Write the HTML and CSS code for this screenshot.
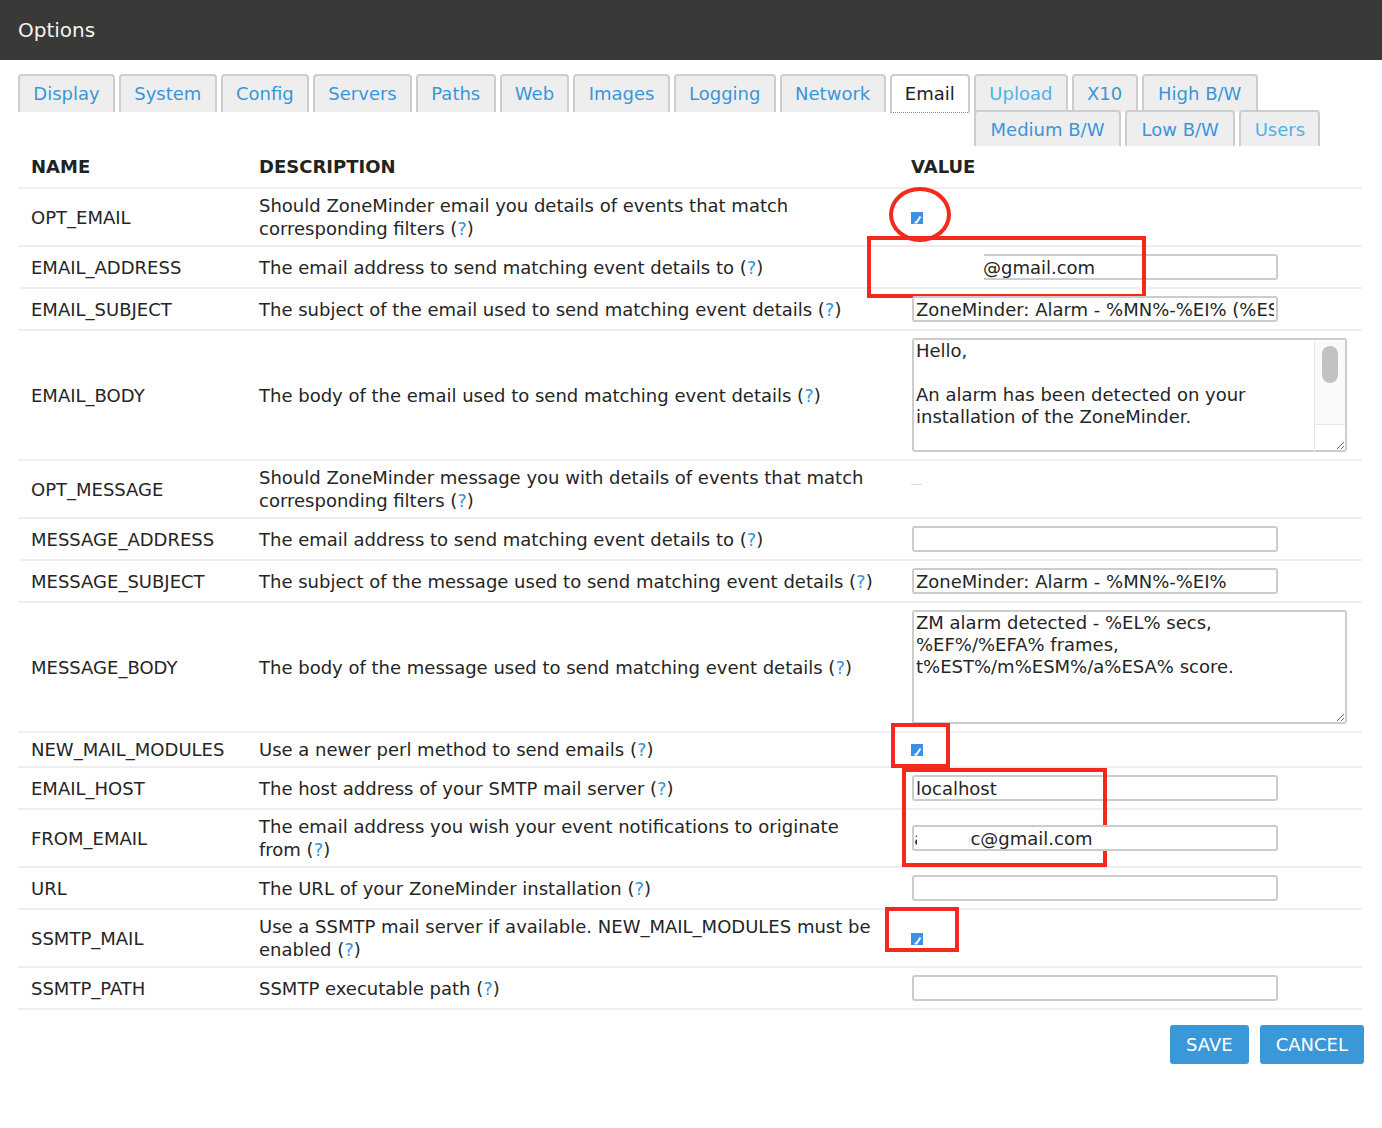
FILE: index.html
```html
<!DOCTYPE html>
<html lang="en">
<head>
    <meta charset="UTF-8">
    <title>Options - ZoneMinder</title>
    <link rel="stylesheet" href="styles.css">
</head>
<body>
    <div class="titlebar">Options</div>

    <div class="page">
        <ul class="tabs">
            <li><a href="#">Display</a></li>
            <li><a href="#">System</a></li>
            <li><a href="#">Config</a></li>
            <li><a href="#">Servers</a></li>
            <li><a href="#">Paths</a></li>
            <li><a href="#">Web</a></li>
            <li><a href="#">Images</a></li>
            <li><a href="#">Logging</a></li>
            <li><a href="#">Network</a></li>
            <li class="active"><a href="#">Email</a></li>
            <li><a href="#" class="fresh">Upload</a></li>
            <li><a href="#">X10</a></li>
            <li><a href="#" class="wide">High B/W</a></li>
            <li><a href="#" class="wide">Medium B/W</a></li>
            <li><a href="#" class="wide">Low B/W</a></li>
            <li><a href="#" class="fresh">Users</a></li>
        </ul>

        <form class="options-form">
            <table class="options">
                <colgroup>
                    <col class="col-name">
                    <col class="col-desc">
                    <col class="col-value">
                </colgroup>
                <thead>
                    <tr>
                        <th>NAME</th>
                        <th>DESCRIPTION</th>
                        <th>VALUE</th>
                    </tr>
                </thead>
                <tbody>
                    <tr>
                        <td>OPT_EMAIL</td>
                        <td>Should ZoneMinder email you details of events that match corresponding filters (<a href="#">?</a>)</td>
                        <td class="value">
                            <input type="checkbox" class="check" checked>
                            <span class="mark mark-round" style="left:-9px;top:-2px;width:62px;height:55px"></span>
                        </td>
                    </tr>
                    <tr>
                        <td>EMAIL_ADDRESS</td>
                        <td>The email address to send matching event details to (<a href="#">?</a>)</td>
                        <td class="value">
                            <input type="text" class="field field-indent" value="@gmail.com">
                            <span class="blank" style="left:2px;top:4px;width:84px;height:34px"></span>
                            <span class="mark" style="left:-31px;top:-11px;width:279px;height:62px"></span>
                        </td>
                    </tr>
                    <tr>
                        <td>EMAIL_SUBJECT</td>
                        <td>The subject of the email used to send matching event details (<a href="#">?</a>)</td>
                        <td class="value"><input type="text" class="field" value="ZoneMinder: Alarm - %MN%-%EI% (%ESM% - %ESA% %EFA%)"></td>
                    </tr>
                    <tr>
                        <td>EMAIL_BODY</td>
                        <td>The body of the email used to send matching event details (<a href="#">?</a>)</td>
                        <td class="value">
                            <div class="area-box">
                                <textarea class="area area-long">Hello,

An alarm has been detected on your installation of the ZoneMinder.

The details are as follows :-

  Monitor  : %MN%
  Event Id : %EI%
  Length   : %EL%

ZoneMinder</textarea>
                                <span class="scroll-track"><span class="scroll-thumb"></span></span>
                                <span class="scroll-corner"></span>
                            </div>
                        </td>
                    </tr>
                    <tr>
                        <td>OPT_MESSAGE</td>
                        <td>Should ZoneMinder message you with details of events that match corresponding filters (<a href="#">?</a>)</td>
                        <td class="value"><input type="checkbox" class="check" disabled></td>
                    </tr>
                    <tr>
                        <td>MESSAGE_ADDRESS</td>
                        <td>The email address to send matching event details to (<a href="#">?</a>)</td>
                        <td class="value"><input type="text" class="field" value=""></td>
                    </tr>
                    <tr>
                        <td>MESSAGE_SUBJECT</td>
                        <td>The subject of the message used to send matching event details (<a href="#">?</a>)</td>
                        <td class="value"><input type="text" class="field" value="ZoneMinder: Alarm - %MN%-%EI%"></td>
                    </tr>
                    <tr>
                        <td>MESSAGE_BODY</td>
                        <td>The body of the message used to send matching event details (<a href="#">?</a>)</td>
                        <td class="value"><textarea class="area">ZM alarm detected - %EL% secs, %EF%/%EFA% frames, t%EST%/m%ESM%/a%ESA% score.</textarea></td>
                    </tr>
                    <tr>
                        <td>NEW_MAIL_MODULES</td>
                        <td>Use a newer perl method to send emails (<a href="#">?</a>)</td>
                        <td class="value">
                            <input type="checkbox" class="check" checked>
                            <span class="mark" style="left:-7px;top:-10px;width:59px;height:45px"></span>
                        </td>
                    </tr>
                    <tr>
                        <td>EMAIL_HOST</td>
                        <td>The host address of your SMTP mail server (<a href="#">?</a>)</td>
                        <td class="value">
                            <input type="text" class="field" value="localhost">
                            <span class="mark" style="left:4px;top:0;width:205px;height:99px"></span>
                        </td>
                    </tr>
                    <tr>
                        <td>FROM_EMAIL</td>
                        <td>The email address you wish your event notifications to originate from (<a href="#">?</a>)</td>
                        <td class="value">
                            <input type="text" class="field field-from" value="adminc@gmail.com">
                            <span class="blank" style="left:19px;top:18px;width:52px;height:21px"></span>
                        </td>
                    </tr>
                    <tr>
                        <td>URL</td>
                        <td>The URL of your ZoneMinder installation (<a href="#">?</a>)</td>
                        <td class="value"><input type="text" class="field" value=""></td>
                    </tr>
                    <tr>
                        <td>SSMTP_MAIL</td>
                        <td>Use a SSMTP mail server if available. NEW_MAIL_MODULES must be enabled (<a href="#">?</a>)</td>
                        <td class="value">
                            <input type="checkbox" class="check" checked>
                            <span class="mark" style="left:-13px;top:-3px;width:74px;height:45px"></span>
                        </td>
                    </tr>
                    <tr>
                        <td>SSMTP_PATH</td>
                        <td>SSMTP executable path (<a href="#">?</a>)</td>
                        <td class="value"><input type="text" class="field" value=""></td>
                    </tr>
                </tbody>
            </table>

            <div class="actions">
                <button type="submit" class="btn">SAVE</button>
                <button type="button" class="btn">CANCEL</button>
            </div>
        </form>
    </div>
</body>
</html>
```

FILE: styles.css
```css
* {
    box-sizing: border-box;
}

body {
    margin: 0;
    font-family: 'DejaVu Sans', Verdana, sans-serif;
    font-size: 18px;
    color: #252525;
    background: #fff;
}

a {
    color: #3a96dc;
    text-decoration: none;
}

.titlebar {
    height: 60px;
    line-height: 60px;
    padding-left: 18px;
    background: #393937;
    color: #f2f2f2;
    font-size: 20px;
}

.page {
    padding: 0 18px 40px 18px;
}

/* tab strip, floats wrap onto a second row */
.tabs {
    list-style: none;
    margin: 14px 0 0;
    padding: 0;
    overflow: hidden;
}

.tabs li {
    float: left;
    margin: 0 4px -2px 0;
}

.tabs a {
    display: block;
    height: 38px;
    line-height: 36px;
    padding: 0 13.3px;
    border: 2px solid #cdcdcd;
    border-bottom: none;
    border-radius: 4px 4px 0 0;
    background: #eeeeee;
    color: #3a96dc;
}

.tabs a.wide {
    padding: 0 14.5px;
}

.tabs a.fresh {
    color: #4eb2ea;
}

.tabs li.active a {
    height: 39px;
    background: #fff;
    color: #222;
    border-bottom: 1px dotted #8a7db6;
}

/* options table */
.options {
    width: 1344px;
    margin-top: 5px;
    border-collapse: collapse;
    table-layout: fixed;
}

.col-name { width: 228px; }
.col-desc { width: 652px; }
.col-value { width: 464px; }

.options th {
    text-align: left;
    font-weight: bold;
    padding: 4px 13px 9px;
    line-height: 23px;
    color: #222;
}

.options td {
    padding: 5px 13px;
    line-height: 23px;
    border-top: 2px solid #efefef;
    vertical-align: middle;
}

.options tbody tr:last-child td {
    border-bottom: 2px solid #efefef;
}

.options td.value {
    position: relative;
}

.field {
    display: block;
    width: 366px;
    height: 26px;
    margin: 2px 0 2px 1px;
    padding: 0 2px;
    border: 2px solid #cccccc;
    border-radius: 3px;
    font-family: inherit;
    font-size: 18px;
    color: #252525;
    background: #fff;
}

.field-indent {
    padding-left: 69px;
}

.field-from {
    padding-left: 0;
}

.area {
    display: block;
    width: 435px;
    height: 114px;
    margin: 2px 0 2px 1px;
    padding: 0 2px;
    border: 2px solid #cccccc;
    border-radius: 3px;
    font-family: inherit;
    font-size: 18px;
    line-height: 22px;
    color: #252525;
}

/* long body text: scrollbar drawn by hand along the right edge */
.area-box {
    position: relative;
    width: 436px;
}

.area-long {
    overflow: hidden;
    padding-right: 33px;
}

.scroll-track {
    position: absolute;
    left: 403px;
    top: 4px;
    width: 31px;
    height: 82px;
    background: #fafafa;
    border-left: 1px solid #e6e6e6;
}

.scroll-thumb {
    position: absolute;
    left: 7px;
    top: 4px;
    width: 16px;
    height: 37px;
    border-radius: 8px;
    background: #c2c2c2;
}

.scroll-corner {
    position: absolute;
    left: 403px;
    top: 86px;
    width: 31px;
    height: 28px;
    border-top: 1px solid #e6e6e6;
    border-left: 1px solid #e6e6e6;
}

.check {
    -webkit-appearance: none;
    appearance: none;
    display: block;
    width: 12px;
    height: 12px;
    margin: 6px 0 5px;
    border: none;
    background: url("data:image/svg+xml;utf8,<svg xmlns='http://www.w3.org/2000/svg' width='12' height='12'><rect width='12' height='12' fill='%233c8fe9'/><path d='M3.5 10.5h2l4-6' fill='none' stroke='white' stroke-width='2'/></svg>") no-repeat;
}

.check:disabled {
    height: 7px;
    margin: 0 0 16px;
    background: none;
    border-bottom: 1px solid #dddddd;
    width: 11px;
}

/* hand-drawn highlights and whited-out parts of addresses */
.mark {
    position: absolute;
    border: 4px solid #f2291d;
    pointer-events: none;
}

.mark-round {
    border-radius: 50%;
}

.blank {
    position: absolute;
    background: #fff;
}

.actions {
    display: flex;
    justify-content: flex-end;
    gap: 11px;
    width: 1346px;
    margin-top: 15px;
}

.btn {
    height: 39px;
    padding: 0 16px;
    border: none;
    border-radius: 3px;
    background: #3a98d8;
    color: #fff;
    font-family: 'DejaVu Sans', Verdana, sans-serif;
    font-size: 18px;
    cursor: pointer;
}
```
